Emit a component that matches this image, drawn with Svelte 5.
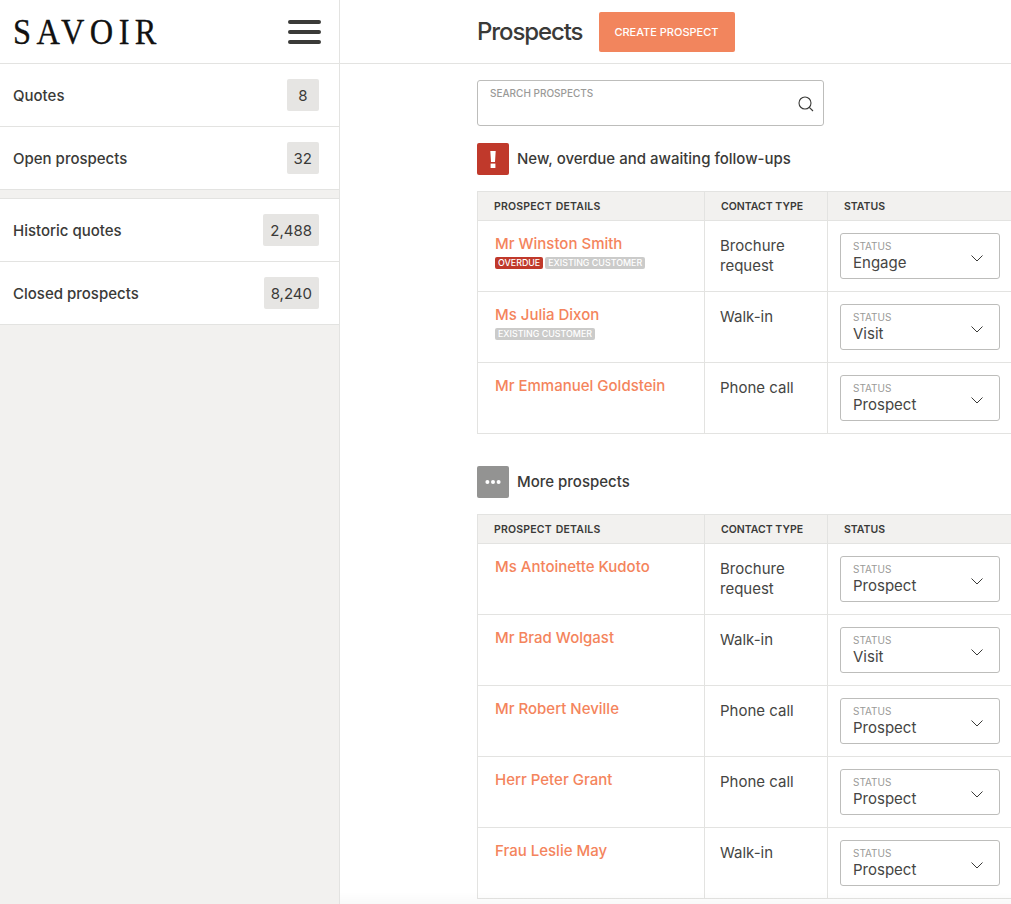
<script>
  // sidebar counts
  const topLinks = [
    { label: 'Quotes', count: '8' },
    { label: 'Open prospects', count: '32' }
  ];
  const historyLinks = [
    { label: 'Historic quotes', count: '2,488' },
    { label: 'Closed prospects', count: '8,240' }
  ];

  const urgent = [
    { name: 'Mr Winston Smith', tags: ['overdue', 'existing'], contact: 'Brochure request', status: 'Engage' },
    { name: 'Ms Julia Dixon', tags: ['existing'], contact: 'Walk-in', status: 'Visit' },
    { name: 'Mr Emmanuel Goldstein', tags: [], contact: 'Phone call', status: 'Prospect' }
  ];
  const more = [
    { name: 'Ms Antoinette Kudoto', tags: [], contact: 'Brochure request', status: 'Prospect' },
    { name: 'Mr Brad Wolgast', tags: [], contact: 'Walk-in', status: 'Visit' },
    { name: 'Mr Robert Neville', tags: [], contact: 'Phone call', status: 'Prospect' },
    { name: 'Herr Peter Grant', tags: [], contact: 'Phone call', status: 'Prospect' },
    { name: 'Frau Leslie May', tags: [], contact: 'Walk-in', status: 'Prospect' }
  ];
</script>

{#snippet links(items)}
  <ul class="links">
    {#each items as item}
      <li>
        <span class="link-label">{item.label}</span>
        <span class="count">{item.count}</span>
      </li>
    {/each}
  </ul>
{/snippet}

{#snippet prospects(rows)}
  <table>
    <thead>
      <tr>
        <th class="col-details">Prospect details</th>
        <th class="col-contact">Contact type</th>
        <th class="col-status">Status</th>
      </tr>
    </thead>
    <tbody>
      {#each rows as row}
        <tr>
          <td>
            <div class="name">{row.name}</div>
            {#if row.tags.length}
              <div class="tags">
                {#each row.tags as tag}
                  <span class="tag {tag}">{tag === 'overdue' ? 'Overdue' : 'Existing customer'}</span>
                {/each}
              </div>
            {/if}
          </td>
          <td class="contact">{row.contact}</td>
          <td class="status-cell">
            <div class="select">
              <div>
                <div class="select-label">Status</div>
                <div class="select-value">{row.status}</div>
              </div>
              <svg class="chevron" width="12" height="7" viewBox="0 0 12 7" fill="none" stroke="#3a3a38" stroke-width="1">
                <path d="M0.5 0.5l5.5 5.5 5.5-5.5" />
              </svg>
            </div>
          </td>
        </tr>
      {/each}
    </tbody>
  </table>
{/snippet}

<div class="page">
  <aside>
    <div class="brand">
      <span class="logo">SAVOIR</span>
      <div class="burger"><span></span><span></span><span></span></div>
    </div>
    {@render links(topLinks)}
    <div class="spacer"></div>
    {@render links(historyLinks)}
  </aside>

  <main>
    <header>
      <h1>Prospects</h1>
      <button>Create prospect</button>
    </header>

    <div class="content">
      <div class="search">
        <span class="search-label">Search prospects</span>
        <svg class="search-icon" width="16" height="16" viewBox="0 0 16 16" fill="none" stroke="#3a3a38" stroke-width="1.1">
          <circle cx="7" cy="7" r="6" />
          <path d="M11.3 11.3L15 15" />
        </svg>
      </div>

      <div class="section-head">
        <span class="badge red">
          <svg width="6" height="17" viewBox="0 0 6 17" fill="#fff">
            <path d="M0.3 0h5.4l-0.7 11h-4z" />
            <rect x="0.6" y="12.6" width="4.8" height="4.4" />
          </svg>
        </span>
        <h2>New, overdue and awaiting follow-ups</h2>
      </div>
      {@render prospects(urgent)}

      <div class="section-head second">
        <span class="badge grey">
          <svg width="16" height="4" viewBox="0 0 16 4" fill="#fff">
            <circle cx="2.4" cy="2" r="2" />
            <circle cx="8" cy="2" r="2" />
            <circle cx="13.6" cy="2" r="2" />
          </svg>
        </span>
        <h2>More prospects</h2>
      </div>
      {@render prospects(more)}
    </div>
  </main>
  <div class="fade"></div>
</div>

<style>
  :global(body) {
    margin: 0;
    background: #fff;
  }

  .page {
    display: flex;
    height: 904px;
    overflow: hidden;
    position: relative;
    font-family: Inter, "Liberation Sans", sans-serif;
    color: #3a3a38;
  }

  aside {
    flex: 0 0 339px;
    background: #f2f1ef;
    border-right: 1px solid #e3e3e1;
  }

  .brand {
    height: 63px;
    background: #fff;
    border-bottom: 1px solid #e3e3e1;
    display: flex;
    align-items: center;
    justify-content: space-between;
    padding: 0 18px 0 13px;
  }

  .logo {
    font-family: "Liberation Serif", serif;
    font-size: 36px;
    letter-spacing: 6px;
    color: #111;
    line-height: 1;
    -webkit-text-stroke: 0.3px #111;
    transform: scaleX(0.9);
    transform-origin: left center;
  }

  .burger {
    width: 33px;
    display: flex;
    flex-direction: column;
    gap: 6px;
  }

  .burger span {
    height: 4px;
    border-radius: 2px;
    background: #3a3a38;
  }

  .links {
    list-style: none;
    margin: 0;
    padding: 0;
    background: #fff;
  }

  .links li {
    height: 62px;
    border-bottom: 1px solid #e3e3e1;
    display: flex;
    align-items: center;
    justify-content: space-between;
    padding: 0 20px 0 13px;
  }

  .link-label {
    font-size: 15px;
    font-weight: 500;
  }

  .count {
    min-width: 32px;
    height: 32px;
    padding: 0 7px;
    box-sizing: border-box;
    background: #e6e5e3;
    border-radius: 2px;
    display: flex;
    align-items: center;
    justify-content: center;
    font-size: 15px;
  }

  .spacer {
    height: 8px;
    border-bottom: 1px solid #e3e3e1;
  }

  main {
    flex: 1;
    min-width: 0;
  }

  header {
    height: 63px;
    border-bottom: 1px solid #e3e3e1;
    display: flex;
    align-items: center;
    gap: 17px;
    padding-left: 137px;
  }

  h1 {
    margin: 0;
    font-size: 24px;
    font-weight: 500;
    letter-spacing: -1.1px;
  }

  button {
    width: 136px;
    height: 40px;
    border: 0;
    border-radius: 2px;
    background: #f2855d;
    color: #fff;
    font-family: inherit;
    font-size: 11px;
    font-weight: 500;
    text-transform: uppercase;
    padding: 0 2px 0 0;
  }

  .content {
    padding: 16px 0 0 137px;
    width: 537px;
  }

  .search {
    width: 347px;
    height: 46px;
    box-sizing: border-box;
    border: 1px solid #bdbdbb;
    border-radius: 3px;
    position: relative;
    padding: 6px 12px;
  }

  .search-label {
    font-size: 10px;
    font-weight: 500;
    text-transform: uppercase;
    color: #9a9a98;
    display: block;
  }

  .search-icon {
    position: absolute;
    right: 9px;
    top: 15px;
  }

  .section-head {
    display: flex;
    align-items: center;
    gap: 8px;
    margin: 17px 0 16px;
  }

  .section-head.second {
    margin-top: 32px;
    margin-bottom: 16px;
  }

  .badge {
    width: 32px;
    height: 32px;
    border-radius: 2px;
    display: flex;
    align-items: center;
    justify-content: center;
  }

  .badge.red {
    background: #c0392b;
  }

  .badge.grey {
    background: #939392;
  }

  h2 {
    margin: 0;
    padding-bottom: 2px;
    font-size: 15px;
    font-weight: 500;
  }

  table {
    width: 536px;
    table-layout: fixed;
    border-collapse: collapse;
  }

  th {
    height: 29px;
    padding: 0 16px;
    box-sizing: border-box;
    background: #f2f1ef;
    border: 1px solid #e3e3e1;
    text-align: left;
    font-size: 10.5px;
    font-weight: 600;
    text-transform: uppercase;
    color: #3a3a38;
  }

  .col-details {
    width: 227px;
    letter-spacing: 0.2px;
    word-spacing: 1px;
  }

  .col-contact {
    width: 123px;
  }

  td {
    height: 71px;
    padding: 13px 15px 0 17px;
    box-sizing: border-box;
    border: 1px solid #e3e3e1;
    vertical-align: top;
  }

  .name {
    font-size: 15px;
    font-weight: 500;
    line-height: 20px;
    color: #f4845c;
    white-space: nowrap;
  }

  .tags {
    display: flex;
    gap: 2px;
    margin-top: 3px;
  }

  .tag {
    height: 12px;
    line-height: 12px;
    padding: 0 3px;
    border-radius: 2px;
    color: #fff;
    font-size: 8.9px;
    font-weight: 500;
    text-transform: uppercase;
    white-space: nowrap;
  }

  .tag.overdue {
    background: #c0392b;
  }

  .tag.existing {
    background: #cbcbca;
  }

  .contact {
    padding: 15px 15px 0 15px;
    font-size: 15px;
    line-height: 20px;
    color: #454543;
  }

  .status-cell {
    padding: 12px 12px 0;
  }

  .select {
    width: 160px;
    height: 46px;
    box-sizing: border-box;
    border: 1px solid #bdbdbb;
    border-radius: 3px;
    padding: 6px 22px 0 12px;
    display: flex;
    justify-content: space-between;
  }

  .select-label {
    font-size: 10px;
    line-height: 12px;
    text-transform: uppercase;
    color: #9a9a98;
  }

  .select-value {
    font-size: 15px;
    line-height: 20px;
    margin-top: 1px;
    color: #454543;
  }

  .chevron {
    margin-top: 15px;
    margin-right: -6px;
  }

  .fade {
    position: absolute;
    left: 340px;
    right: 0;
    bottom: 0;
    height: 12px;
    background: linear-gradient(rgba(0, 0, 0, 0), rgba(0, 0, 0, 0.025));
  }
</style>
